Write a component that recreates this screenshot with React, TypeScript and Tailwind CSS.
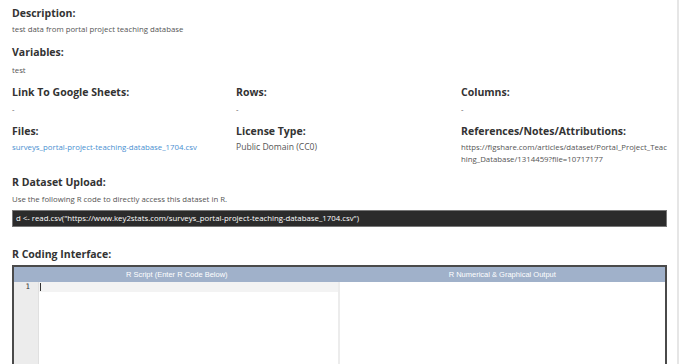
export default function App() {
  const heading = "text-[10.5px] leading-[16px] font-bold text-[#333]";
  const body = "text-[7.8px] leading-[12px] text-[#555]";

  return (
    <div className="w-[680px] h-[364px] bg-white overflow-hidden font-['Open_Sans',sans-serif]">
      <div className="w-[679px] h-full border-r-2 border-[#e6e6e6] pl-3 pr-[10px] pt-[5px]">
        {/* Description */}
        <h3 className={heading}>Description:</h3>
        <p className={`${body} mt-[2px]`}>test data from portal project teaching database</p>

        <h3 className={`${heading} mt-[9px]`}>Variables:</h3>
        <p className={`${body} mt-[4px]`}>test</p>

        {/* info grid */}
        <div className="grid grid-cols-[224px_225px_1fr] mt-[8px]">
          <div>
            <h3 className={heading}>Link To Google Sheets:</h3>
            <p className={`${body} mt-[3px]`}>-</p>
          </div>
          <div>
            <h3 className={heading}>Rows:</h3>
            <p className={`${body} mt-[3px]`}>-</p>
          </div>
          <div>
            <h3 className={heading}>Columns:</h3>
            <p className={`${body} mt-[3px]`}>-</p>
          </div>
        </div>

        <div className="grid grid-cols-[224px_225px_1fr] mt-[8px]">
          <div>
            <h3 className={heading}>Files:</h3>
            <a href="#" className={`${body} block mt-[2px] !text-[#4a8fd1]`}>
              surveys_portal-project-teaching-database_1704.csv
            </a>
          </div>
          <div>
            <h3 className={heading}>License Type:</h3>
            <p className="text-[8.6px] leading-[12px] text-[#555] mt-[2px]">Public Domain (CC0)</p>
          </div>
          <div>
            <h3 className={heading}>References/Notes/Attributions:</h3>
            <p className={`${body} mt-[2px] break-all`}>
              https://figshare.com/articles/dataset/Portal_Project_Teaching_Database/1314459?file=10717177
            </p>
          </div>
        </div>

        {/* R dataset upload */}
        <h3 className={`${heading} mt-[9px]`}>R Dataset Upload:</h3>
        <p className={`${body} mt-[3px]`}>Use the following R code to directly access this dataset in R.</p>
        <div className="mt-[5px] h-[17px] bg-[#2b2b2b] border border-[#777] flex items-center px-[3px] text-[7.8px] text-white">
          d &lt;- read.csv("https://www.key2stats.com/surveys_portal-project-teaching-database_1704.csv")
        </div>

        {/* R coding interface */}
        <h3 className={`${heading} mt-[19px]`}>R Coding Interface:</h3>
        <div className="mt-[3px] h-[120px] border-x-2 border-t-2 border-[#4a4a4a] grid grid-cols-2">
          <div className="flex flex-col">
            <div className="h-[15px] bg-[#a0b1ca] flex items-center justify-center text-[7.5px] text-white font-['Liberation_Sans',sans-serif]">
              R Script (Enter R Code Below)
            </div>
            <div className="flex flex-1 border-r-2 border-[#ececec]">
              <div className="w-[25px] bg-[#ececec] border-r border-[#e0e0e0]">
                <div className="h-[10px] flex items-center justify-end pr-[8px] text-[7.5px] text-[#333] font-['DejaVu_Sans_Mono',monospace]">
                  1
                </div>
              </div>
              <div className="flex-1">
                <div className="h-[10px] bg-[#f3f3f3] flex items-center">
                  <div className="w-px h-[8px] bg-[#333] ml-[1px]" />
                </div>
              </div>
            </div>
          </div>
          <div className="flex flex-col">
            <div className="h-[15px] bg-[#a0b1ca] flex items-center justify-center text-[7.5px] text-white font-['Liberation_Sans',sans-serif]">
              R Numerical &amp; Graphical Output
            </div>
            <div className="flex-1 bg-white" />
          </div>
        </div>
      </div>
    </div>
  );
}
